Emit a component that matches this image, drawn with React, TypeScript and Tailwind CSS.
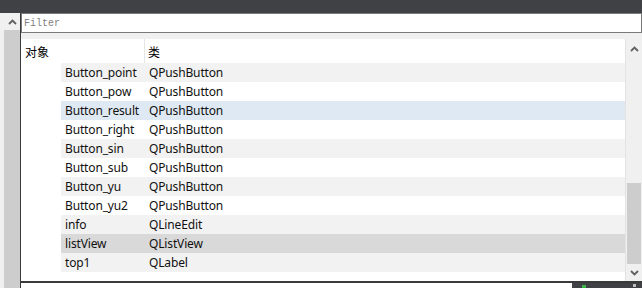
import React from "react";

const rows: { name: string; cls: string; bg: string }[] = [
  { name: "Button_point", cls: "QPushButton", bg: "bg-[#f2f2f2]" },
  { name: "Button_pow", cls: "QPushButton", bg: "bg-white" },
  { name: "Button_result", cls: "QPushButton", bg: "bg-[#dfe9f4]" },
  { name: "Button_right", cls: "QPushButton", bg: "bg-white" },
  { name: "Button_sin", cls: "QPushButton", bg: "bg-[#f2f2f2]" },
  { name: "Button_sub", cls: "QPushButton", bg: "bg-white" },
  { name: "Button_yu", cls: "QPushButton", bg: "bg-[#f2f2f2]" },
  { name: "Button_yu2", cls: "QPushButton", bg: "bg-white" },
  { name: "info", cls: "QLineEdit", bg: "bg-[#f2f2f2]" },
  { name: "listView", cls: "QListView", bg: "bg-[#d9d9d9]" },
  { name: "top1", cls: "QLabel", bg: "bg-[#f2f2f2]" },
];

function Chevron({ up }: { up?: boolean }) {
  return (
    <svg width="9" height="6" viewBox="0 0 9 6">
      <path
        d={up ? "M1 5 L4.5 1.5 L8 5" : "M1 1 L4.5 4.5 L8 1"}
        stroke="#606060"
        strokeWidth="1.8"
        fill="none"
      />
    </svg>
  );
}

export default function App() {
  return (
    <div
      className="w-[642px] h-[288px] flex flex-col overflow-hidden bg-[#f0f0f0]"
      style={{ fontFamily: '"Noto Sans", "Noto Sans CJK SC", sans-serif' }}
    >
      <div className="h-[13px] bg-[#3f4145] shrink-0" />
      <div className="flex flex-1 min-h-0">
        {/* left scrollbar strip */}
        <div className="w-[20px] shrink-0 flex bg-[#f0f0f0]">
          <div className="ml-[4px] w-[16px] flex flex-col">
            <div className="h-[17px] flex items-center justify-center">
              <Chevron up />
            </div>
            <div className="flex-1 bg-[#cdcdcd]" />
          </div>
        </div>
        <div className="w-[1px] bg-[#3a3a3a] shrink-0" />
        {/* content */}
        <div className="flex-1 flex flex-col min-w-0">
          <div className="h-[20px] shrink-0 bg-white border border-[#7a7a7a] flex items-center pl-[2px]">
            <span
              className="text-[10px] text-[#808080]"
              style={{ fontFamily: '"Liberation Mono", monospace' }}
            >
              Filter
            </span>
          </div>
          <div className="h-[6px] shrink-0" />
          <div className="flex h-[242px] shrink-0">
            <div className="w-[605px] bg-white border-r border-[#e3e3e3] flex flex-col">
              <div className="h-[24px] flex items-center text-[12px] text-black">
                <div className="w-[124px] pl-[4px] pt-[3px] h-full flex items-center border-r border-[#e5e5e5]">
                  对象
                </div>
                <div className="pl-[3px] pt-[3px]">类</div>
              </div>
              {rows.map((r) => (
                <div key={r.name} className="h-[19px] flex pl-[40px]">
                  <div
                    className={`flex-1 flex items-center text-[12px] tracking-[-0.15px] text-[#111] pt-[1px] ${r.bg}`}
                  >
                    <div className="w-[84px] pl-[4px]">{r.name}</div>
                    <div className="pl-[4px]">{r.cls}</div>
                  </div>
                </div>
              ))}
            </div>
            <div className="flex-1 flex flex-col bg-[#f0f0f0]">
              <div className="h-[17px] flex items-center justify-center mt-[1px]">
                <Chevron up />
              </div>
              <div className="flex-1 flex flex-col justify-end">
                <div className="h-[81px] bg-[#cdcdcd] mx-[1px]" />
              </div>
              <div className="h-[17px] flex items-center justify-center">
                <Chevron />
              </div>
            </div>
          </div>
          <div className="h-[2px] bg-[#3a3a3a] shrink-0" />
          <div className="flex flex-1">
            <div className="w-[551px] bg-white" />
            <div className="flex-1 bg-[#3f4145] relative">
              <div className="absolute left-[10px] top-[2px] w-[4px] h-[4px] bg-[#3bb54a]" />
              <div className="absolute left-[61px] top-[1px] w-[3px] h-[3px] bg-[#bfbfbf]" />
            </div>
          </div>
        </div>
      </div>
    </div>
  );
}
